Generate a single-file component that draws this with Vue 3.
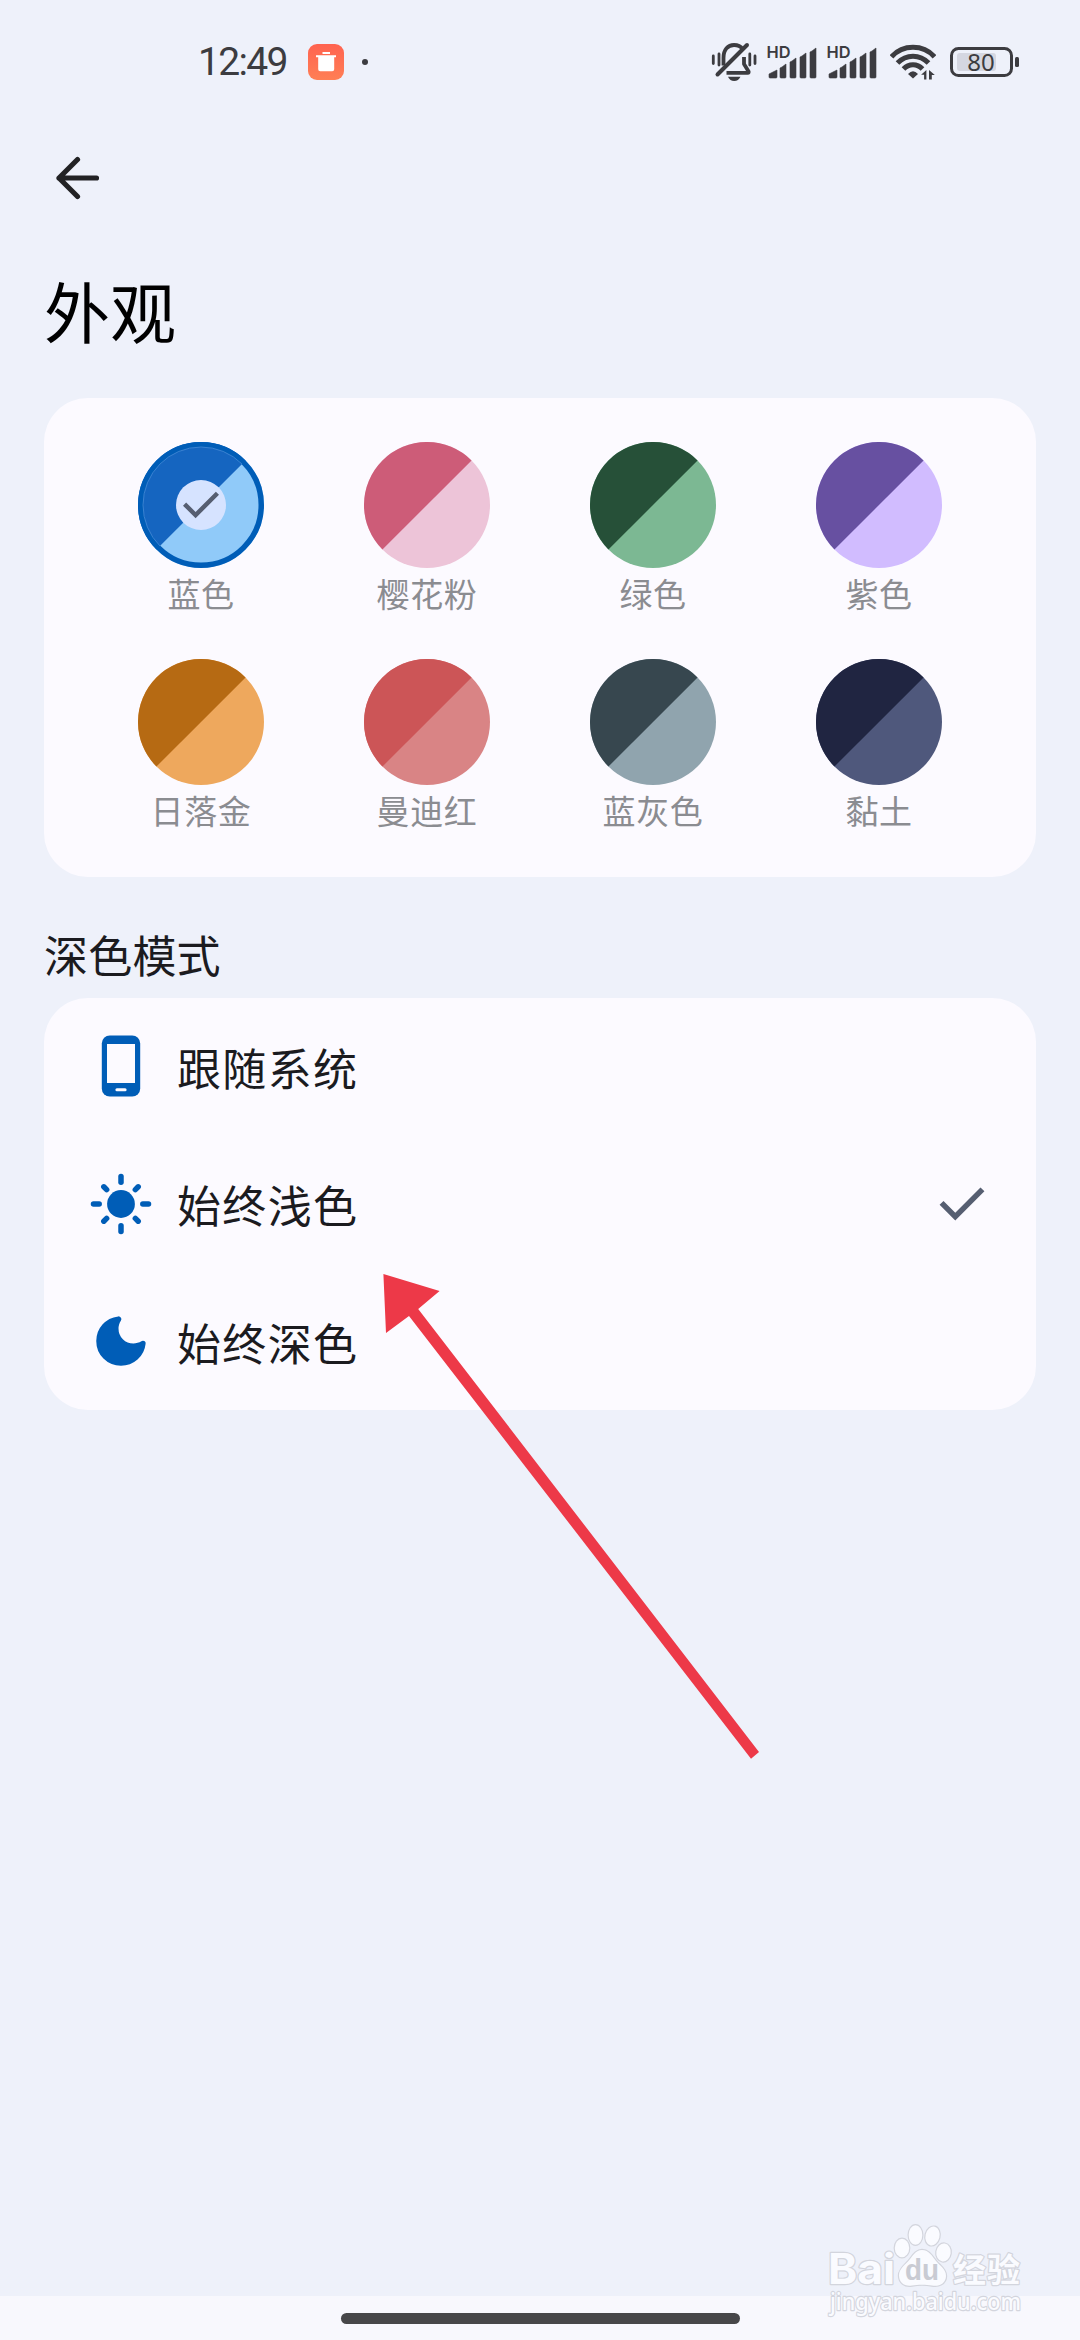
<script setup>
const themes = [
  { name: '蓝色', dark: '#1565c0', light: '#90caf9', selected: true },
  { name: '樱花粉', dark: '#cd5c78', light: '#edc4d8' },
  { name: '绿色', dark: '#265038', light: '#7cb893' },
  { name: '紫色', dark: '#6750a1', light: '#d1bcff' },
  { name: '日落金', dark: '#b66a13', light: '#eea85d' },
  { name: '曼迪红', dark: '#cc5557', light: '#d98485' },
  { name: '蓝灰色', dark: '#37474f', light: '#90a4ae' },
  { name: '黏土', dark: '#202541', light: '#4f587c' },
]

const modes = [
  { key: 'system', label: '跟随系统' },
  { key: 'light', label: '始终浅色', active: true },
  { key: 'dark', label: '始终深色' },
]

const bars = [
  [1, 33, 8, 8],
  [12, 27, 6, 14],
  [22, 21, 6, 20],
  [32, 16, 6, 25],
  [42, 11, 6, 30],
]
const rays = [0, 45, 90, 135, 180, 225, 270, 315]
</script>

<template>
  <div class="screen">
    <header class="status">
      <span class="time">12:49</span>
      <svg class="trash" width="36" height="36" viewBox="0 0 36 36">
        <defs>
          <linearGradient id="orange" x1="0" y1="0" x2="0" y2="1">
            <stop offset="0" stop-color="#ff6350" />
            <stop offset="1" stop-color="#ff7f55" />
          </linearGradient>
        </defs>
        <rect width="36" height="36" rx="9" fill="url(#orange)" />
        <path d="M14.500 8h7.500v2h-7.500zM8 11.300h20v2h-1.800v12a2 2 0 0 1-2 2H12.200a2 2 0 0 1-2-2v-12H8z" fill="#fff" />
      </svg>
      <span class="dot"></span>
      <span class="spacer"></span>
      <svg class="bell" width="46" height="40" viewBox="0 0 46 40" fill="none" stroke="#3c3c40" stroke-width="3.800">
        <path d="M12.500 23.500V16C12.500 7.500 17 3 23 3c4 0 6.800 1.400 8.600 4" />
        <path d="M33 15v7l4.600 7.500c.3.700 0 1.400-.9 1.400H15.500" stroke-linejoin="round" />
        <path d="M6.500 32.500 36 3" stroke-width="4" stroke-linecap="round" />
        <path d="M2.300 14v7.500M8 12v11M38.800 12v11M44 14v7.500" stroke-width="2.800" stroke-linecap="round" />
        <path d="M17 34.800h12.500Q27.500 39 23.200 39T17 34.800z" fill="#3c3c40" stroke="none" />
      </svg>
      <svg v-for="n in 2" :key="n" class="signal" width="52" height="50" viewBox="0 0 52 50" fill="#3c3c40">
        <text x="-1.500" y="21" class="hd" textLength="24" lengthAdjust="spacingAndGlyphs">HD</text>
        <path
          v-for="b in bars"
          :key="b[0]"
          :d="`M${b[0] + 2} ${b[1] + 3} l${b[2] - 2} -3 v${b[3] - 1} q0 1 -1 1 h-${b[2] - 2} q-1 0 -1 -1 V${b[1] + 4} z`"
          stroke="#3c3c40"
          stroke-width=".6"
          stroke-linejoin="round"
        />
      </svg>
      <svg class="wifi" width="46" height="36" viewBox="0 0 46 36" fill="none" stroke="#3c3c40" stroke-width="5">
        <path d="M1.500 12.800Q10 3.300 23 3.300t21.500 9.500" />
        <path d="M7.500 19Q14 12.200 23 12.200T38.500 19" />
        <path d="M13.500 25Q17.500 20.700 23 20.700T32.500 25" />
        <path d="M18 30q5-5.500 10 0l-5 4.500z" fill="#3c3c40" stroke="none" />
        <path d="M36.400 26v9.500h-2.300v-4.800h-3zM39 35.500V26l5.800 5h-3v4.500z" fill="#3c3c40" stroke="none" />
      </svg>
      <svg class="battery" width="70" height="36" viewBox="0 -3 70 36">
        <rect x="1.500" y="1.500" width="60" height="27" rx="7" fill="none" stroke="#3c3c40" stroke-width="3" />
        <rect x="7" y="6" width="39" height="18" rx="3" fill="#d5d7e1" />
        <rect x="65" y="10" width="4" height="10" rx="1.500" fill="#3c3c40" />
        <text x="31" y="23.700" text-anchor="middle" class="level">80</text>
      </svg>
    </header>

    <nav class="toolbar">
      <svg width="44" height="44" viewBox="0 0 44 44" fill="none" stroke="#222224" stroke-width="5.200" stroke-linecap="round" stroke-linejoin="round">
        <path d="M40.500 22H3M21.500 3.500 3 22l18.500 18.500" />
      </svg>
    </nav>

    <h1>外观</h1>

    <section class="card themes">
      <div v-for="t in themes" :key="t.name" class="theme">
        <svg width="126" height="126" viewBox="0 0 126 126">
          <circle cx="63" cy="63" r="63" :fill="t.light" />
          <path d="M18.450 107.550A63 63 0 0 1 107.550 18.450z" :fill="t.dark" />
          <g v-if="t.selected">
            <circle cx="63" cy="63" r="60.250" fill="none" stroke="#005db7" stroke-width="5.500" />
            <path d="M22 104A57.700 57.700 0 0 1 104 22" fill="none" stroke="#5f9be0" stroke-width=".6" />
            <circle cx="63" cy="63" r="25" fill="#d6e3ff" />
            <svg x="36.500" y="36.500" width="53" height="53" viewBox="0 -960 960 960" fill="#565e71">
              <path d="M382-240 154-468l57-57 171 171 367-367 57 57-424 424Z" />
            </svg>
          </g>
        </svg>
        <span>{{ t.name }}</span>
      </div>
    </section>

    <h2>深色模式</h2>

    <section class="card modes">
      <div v-for="m in modes" :key="m.key" class="mode">
        <svg v-if="m.key === 'system'" width="66" height="66" viewBox="0 0 66 66">
          <rect x="13.800" y="2.500" width="38.400" height="61" rx="8" fill="#005db7" />
          <path d="M19 11h28v39H19z" fill="#fcfaff" />
          <rect x="27.400" y="55.200" width="11.200" height="3" rx="1.500" fill="#fcfaff" />
        </svg>
        <svg v-else-if="m.key === 'light'" width="66" height="66" viewBox="0 0 66 66">
          <circle cx="33" cy="33" r="13.900" fill="#005db7" />
          <path
            v-for="r in rays"
            :key="r"
            :d="r % 90 ? 'M33 12.700v-4' : 'M33 11.200V5.500'"
            :transform="`rotate(${r} 33 33)`"
            stroke="#005db7"
            stroke-width="5.500"
            stroke-linecap="round"
          />
        </svg>
        <svg v-else width="66" height="66" viewBox="0 -960 960 960" fill="#005db7">
          <path d="M480-120q-151 0-255.500-104.500T120-480q0-138 90-239.500T440-838q13-2 23 3.500t16 14.500q6 9 6.500 21t-7.500 23q-17 26-25.500 55t-8.500 61q0 90 63 153t153 63q31 0 61.500-9t54.500-25q11-7 22.500-6.500T819-479q10 5 15.500 15t3.500 24q-14 138-117.500 229T480-120Z" />
        </svg>
        <span class="label">{{ m.label }}</span>
        <svg v-if="m.active" class="tick" width="66" height="66" viewBox="0 -960 960 960" fill="#565e71">
          <path d="M382-240 154-468l57-57 171 171 367-367 57 57-424 424Z" />
        </svg>
      </div>
    </section>

    <footer class="gesture"><span></span></footer>

    <svg class="arrow" width="380" height="488" viewBox="382 1272 380 488">
      <path d="M383.400 1274 439.600 1291 418.200 1309 759 1752 751 1758.700 409 1316 386 1333z" fill="#ed3948" />
    </svg>

    <svg class="watermark" width="220" height="110" viewBox="820 2215 220 110">
      <g fill="#fafbff" stroke="#d3d5dd" stroke-width="2.400" paint-order="stroke" stroke-linejoin="round">
        <text x="828" y="2284" class="brand" textLength="67" lengthAdjust="spacingAndGlyphs">Bai</text>
        <ellipse cx="902" cy="2248" rx="7.200" ry="9.200" />
        <ellipse cx="915.500" cy="2235" rx="6.800" ry="9.800" />
        <ellipse cx="932.500" cy="2236" rx="7" ry="9.500" transform="rotate(14 932.500 2236)" />
        <ellipse cx="943.500" cy="2252.500" rx="7.200" ry="9" transform="rotate(8 943.500 2252.500)" />
        <path d="M922 2250c7 0 10 6 14 11s10 8 10 15c0 8-8 11-14 9.500-6-1-14-1-20 0-7 1.500-13-3-13-10 0-6 5-10 9-14s7-11.500 14-11.500z" />
        <text x="953" y="2282" class="cn" textLength="67">经验</text>
        <text x="830" y="2310" class="url" textLength="191" lengthAdjust="spacingAndGlyphs">jingyan.baidu.com</text>
      </g>
      <text x="905" y="2279.500" class="du" textLength="34" lengthAdjust="spacingAndGlyphs">du</text>
    </svg>
  </div>
</template>

<style>
body {
  margin: 0;
  background: #eef1fa;
}
</style>

<style scoped>
.screen {
  position: relative;
  display: flex;
  flex-direction: column;
  width: 1080px;
  height: 2340px;
  overflow: hidden;
  background: #eef1fa;
  font-family: "Noto Sans CJK SC", sans-serif;
}
svg {
  display: block;
  flex: none;
}
.status {
  display: flex;
  align-items: center;
  height: 124px;
  padding: 0 61px 0 198px;
  box-sizing: border-box;
}
.time {
  width: 110px;
  font: 39px/46px Roboto, sans-serif;
  letter-spacing: -1.700px;
  color: #3c3c40;
}
.dot {
  width: 6px;
  height: 6px;
  margin-left: 18px;
  border-radius: 50%;
  background: #3c3c40;
}
.spacer {
  flex: 1;
}
.bell {
  margin-right: 11px;
}
.signal {
  margin-right: 8px;
  overflow: visible;
}
.hd {
  font: 600 16.500px Inter, sans-serif;
}
.wifi {
  margin: 0 14px 0 2px;
}
.battery {
  margin-right: -1px;
}
.level {
  font: 24px "Noto Sans", sans-serif;
  fill: #3c3c40;
}
.toolbar {
  height: 108px;
  padding: 32px 56px 0;
  box-sizing: border-box;
}
h1 {
  height: 166px;
  margin: 0 0 0 44px;
  padding-top: 29px;
  box-sizing: border-box;
  font-size: 66px;
  font-weight: 400;
  line-height: 96px;
  color: #000;
}
.card {
  margin: 0 44px;
  border-radius: 44px;
  background: #fcfaff;
}
.themes {
  display: grid;
  grid-template-columns: repeat(4, 226px);
  grid-auto-rows: 217px;
  height: 478.500px;
  padding: 44px 44px 0;
  box-sizing: border-box;
}
.theme {
  display: flex;
  flex-direction: column;
  align-items: center;
}
.theme span {
  margin-top: 1px;
  font-size: 33px;
  font-weight: 400;
  line-height: 48px;
  letter-spacing: 0.600px;
  color: #8b8c91;
}
h2 {
  height: 121px;
  margin: 0 0 0 44px;
  padding-top: 45px;
  box-sizing: border-box;
  font-size: 44px;
  font-weight: 400;
  line-height: 64px;
  letter-spacing: 0.200px;
  color: #1b1b1f;
}
.mode {
  display: flex;
  align-items: center;
  gap: 22px;
  height: 137.500px;
  padding: 0 41px 0 44px;
}
.label {
  flex: 1;
  padding: 1px 0 0 1px;
  font-size: 44px;
  line-height: 64px;
  letter-spacing: 1.375px;
  color: #1b1b1f;
}
.gesture {
  display: flex;
  justify-content: center;
  height: 44px;
  margin-top: auto;
  padding-top: 17px;
  box-sizing: border-box;
  background: #f8f8fd;
}
.gesture span {
  width: 399px;
  height: 11px;
  border-radius: 6px;
  background: #474749;
}
.arrow {
  position: absolute;
  left: 382px;
  top: 1272px;
}
.watermark {
  position: absolute;
  left: 820px;
  top: 2215px;
}
.brand {
  font: 700 42px Inter, sans-serif;
}
.cn {
  font: 700 33px "Noto Sans CJK SC", sans-serif;
}
.url {
  font: 500 24px "Noto Sans", sans-serif;
}
.du {
  font: 700 29px "Liberation Sans", sans-serif;
  fill: #c9cbd3;
}
</style>
